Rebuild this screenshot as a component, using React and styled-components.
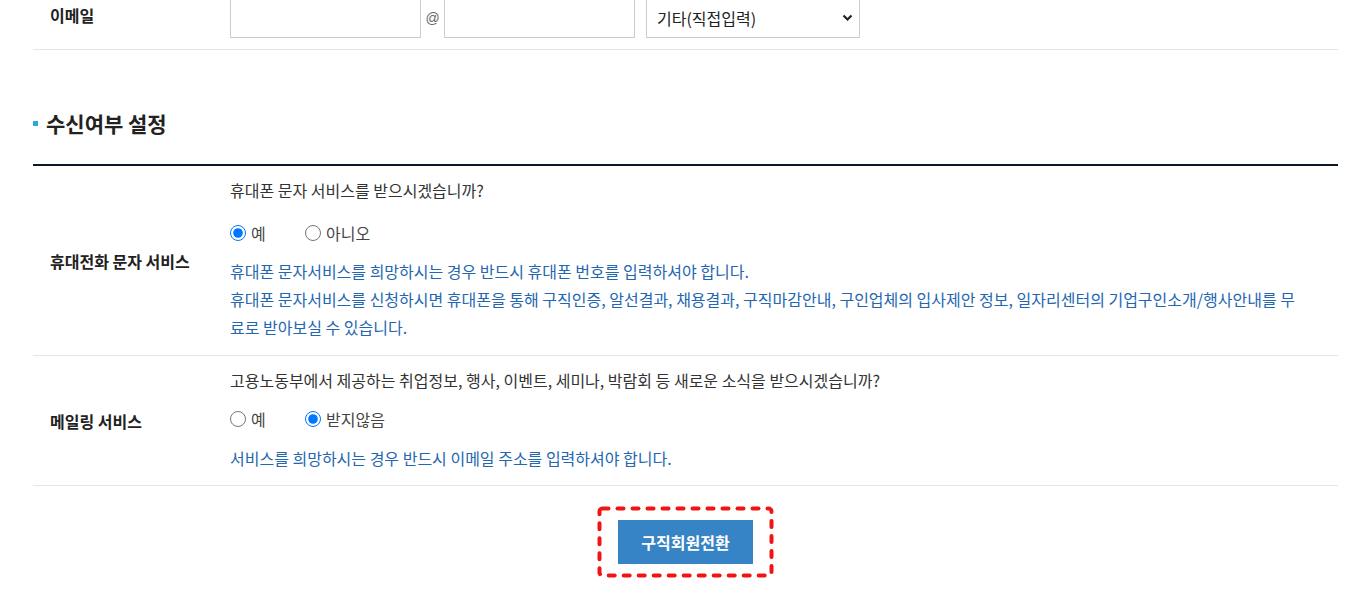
import React from "react";
import styled, { createGlobalStyle } from "styled-components";

const Global = createGlobalStyle`
  html, body { margin: 0; padding: 0; background: #fff; }
  body {
    font-family: "Noto Sans CJK KR", "Noto Sans", sans-serif;
    color: #333;
    font-size: 16px;
    overflow: hidden;
  }
  * { box-sizing: border-box; }
`;

const Page = styled.div`
  margin: -15px 12px 0 33px;
`;

const Row = styled.div`
  display: grid;
  grid-template-columns: 197px 1fr;
  border-bottom: 1px solid #e6e6e6;
`;

const Label = styled.div`
  display: flex;
  align-items: center;
  padding-left: 17px;
  padding-bottom: ${(p) => p.$lift || 0}px;
  font-weight: 700;
  font-size: 16px;
  color: #222;
`;

const EmailCell = styled.div`
  display: flex;
  align-items: center;
  padding: 12px 0 11px;
`;

const TextInput = styled.input`
  width: 191px;
  height: 41px;
  border: 1px solid #cccccc;
  padding: 0 10px;
  font: inherit;
  outline: none;
`;

const At = styled.span`
  width: 23px;
  text-align: center;
  font-family: "Liberation Sans", sans-serif;
  font-size: 14px;
  color: #666;
`;

const SelectWrap = styled.div`
  position: relative;
  margin-left: 11px;
  width: 214px;
  height: 41px;
`;

const Select = styled.select`
  appearance: none;
  width: 100%;
  height: 100%;
  border: 1px solid #cccccc;
  background: #fff;
  padding: 0 10px;
  font: inherit;
  color: #222;
  outline: none;
`;

const Chevron = styled.svg`
  position: absolute;
  right: 7px;
  top: 15px;
  pointer-events: none;
`;

const SectionTitle = styled.h3`
  display: flex;
  align-items: center;
  margin: 59px 0 0;
  padding-bottom: 27px;
  line-height: 28px;
  font-size: 21px;
  font-weight: 700;
  color: #222;
  border-bottom: 2px solid #0c1a27;
  &::before {
    content: "";
    width: 5px;
    height: 5px;
    background: #2ea7d8;
    margin-right: 8px;
  }
`;

const Cell = styled.div`
  padding: 10px 0 ${(p) => p.$bottom}px;
`;

const Question = styled.p`
  margin: 0;
  line-height: 28px;
  color: #333;
`;

const RadioRow = styled.div`
  display: flex;
  align-items: center;
  height: 28px;
  margin: ${(p) => p.$top}px 0 ${(p) => p.$bottom}px;
`;

const Option = styled.label`
  display: flex;
  align-items: center;
  min-width: 75px;
  white-space: nowrap;
  color: #444;
  cursor: pointer;
`;

const Radio = styled.input.attrs({ type: "radio" })`
  width: 16px;
  height: 16px;
  margin: 0 5px 0 0;
`;

const Note = styled.p`
  margin: 0;
  line-height: 28px;
  color: #2466b0;
`;

const ButtonArea = styled.div`
  display: flex;
  justify-content: center;
  padding-top: 20px;
`;

const Highlight = styled.div`
  position: relative;
  padding: 14px 21px;
`;

const Marker = styled.svg`
  position: absolute;
  inset: 0;
  pointer-events: none;
`;

const Button = styled.button`
  width: 135px;
  height: 44px;
  border: 0;
  background: #3683c5;
  color: #fff;
  font: inherit;
  font-weight: 700;
  font-size: 16px;
  cursor: pointer;
`;

export default function App() {
  return (
    <>
      <Global />
      <Page>
        <Row>
          <Label $lift={4}>이메일</Label>
          <EmailCell>
            <TextInput />
            <At>@</At>
            <TextInput />
            <SelectWrap>
              <Select defaultValue="etc">
                <option value="etc">기타(직접입력)</option>
              </Select>
              <Chevron width="11" height="11" viewBox="0 0 11 11">
                <path d="M1.5 3.5 L5.5 7.5 L9.5 3.5" fill="none" stroke="#222" strokeWidth="2.2" />
              </Chevron>
            </SelectWrap>
          </EmailCell>
        </Row>

        <SectionTitle>수신여부 설정</SectionTitle>

        <Row>
          <Label>휴대전화 문자 서비스</Label>
          <Cell $bottom={14}>
            <Question>휴대폰 문자 서비스를 받으시겠습니까?</Question>
            <RadioRow $top={15} $bottom={10}>
              <Option>
                <Radio name="sms" defaultChecked />예
              </Option>
              <Option>
                <Radio name="sms" />아니오
              </Option>
            </RadioRow>
            <Note>휴대폰 문자서비스를 희망하시는 경우 반드시 휴대폰 번호를 입력하셔야 합니다.</Note>
            <Note>
              휴대폰 문자서비스를 신청하시면 휴대폰을 통해 구직인증, 알선결과, 채용결과, 구직마감안내, 구인업체의 입사제안 정보, 일자리센터의 기업구인소개/행사안내를 무
              <br />
              료로 받아보실 수 있습니다.
            </Note>
          </Cell>
        </Row>

        <Row>
          <Label>메일링 서비스</Label>
          <Cell $bottom={13}>
            <Question>고용노동부에서 제공하는 취업정보, 행사, 이벤트, 세미나, 박람회 등 새로운 소식을 받으시겠습니까?</Question>
            <RadioRow $top={11} $bottom={11}>
              <Option>
                <Radio name="mail" />예
              </Option>
              <Option>
                <Radio name="mail" defaultChecked />받지않음
              </Option>
            </RadioRow>
            <Note>서비스를 희망하시는 경우 반드시 이메일 주소를 입력하셔야 합니다.</Note>
          </Cell>
        </Row>

        <ButtonArea>
          <Highlight>
            <Button type="button">구직회원전환</Button>
            <Marker width="177" height="72" viewBox="0 0 177 72">
              <rect
                x="2.5"
                y="2.5"
                width="172"
                height="67"
                rx="3"
                fill="none"
                stroke="#f01414"
                strokeWidth="4"
                strokeDasharray="6 9"
                strokeLinecap="round"
              />
            </Marker>
          </Highlight>
        </ButtonArea>
      </Page>
    </>
  );
}
